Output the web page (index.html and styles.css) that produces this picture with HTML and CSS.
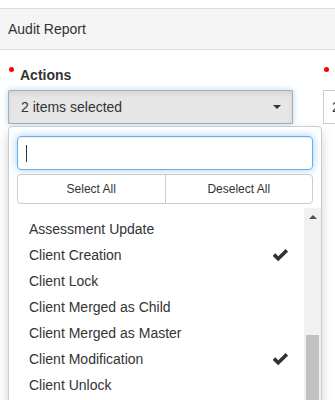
FILE: index.html
```html
<!DOCTYPE html>
<html lang="en">
<head>
    <meta charset="UTF-8">
    <meta name="viewport" content="width=device-width, initial-scale=1.0">
    <title>Audit Report</title>
    <link rel="stylesheet" href="styles.css">
</head>
<body>
    <div class="topbar"></div>
    <div class="panel">
        <div class="panel-heading">Audit Report</div>
        <div class="panel-body">
            <div class="row">
                <div class="col">
                    <label class="field-label"><span class="req"></span>Actions</label>
                    <div class="select-wrap">
                        <button type="button" class="select-btn">
                            <span>2 items selected</span>
                            <span class="caret"></span>
                        </button>

                        <!-- open dropdown -->
                        <div class="menu">
                            <div class="searchbox">
                                <div class="search"><span class="text-cursor"></span></div>
                            </div>
                            <div class="actions">
                                <button type="button" class="act-btn">Select All</button>
                                <button type="button" class="act-btn">Deselect All</button>
                            </div>
                            <div class="list">
                                <div class="items-view">
                                    <ul class="items">
                                        <li>Assessment Update</li>
                                        <li class="selected">Client Creation
                                            <svg class="check" width="15" height="12" viewBox="0 0 15 12"><path d="M1 5.6 L5.2 9.8 L13.9 1.4" fill="none" stroke="#333" stroke-width="3.6"/></svg>
                                        </li>
                                        <li>Client Lock</li>
                                        <li>Client Merged as Child</li>
                                        <li>Client Merged as Master</li>
                                        <li class="selected">Client Modification
                                            <svg class="check" width="15" height="12" viewBox="0 0 15 12"><path d="M1 5.6 L5.2 9.8 L13.9 1.4" fill="none" stroke="#333" stroke-width="3.6"/></svg>
                                        </li>
                                        <li>Client Unlock</li>
                                    </ul>
                                </div>
                                <div class="scrollbar">
                                    <div class="scroll-up"><span class="arrow-up"></span></div>
                                    <div class="thumb"></div>
                                </div>
                            </div>
                        </div>
                    </div>
                </div>
                <div class="col">
                    <label class="field-label"><span class="req"></span>Date From</label>
                    <div class="form-control">2019-01-01</div>
                </div>
            </div>
        </div>
    </div>
</body>
</html>
```

FILE: styles.css
```css
body {
    margin: 0;
    height: 400px;
    font-family: "Liberation Sans", Arial, sans-serif;
    font-size: 14px;
    color: #333;
    background: #fff;
    overflow: hidden;
}
.topbar {
    height: 8px;
    border-bottom: 1px solid #ddd;
}
.panel-heading {
    background: #f5f5f5;
    padding: 10px 8px;
    line-height: 20px;
    border-bottom: 1px solid #ddd;
}
.panel-body {
    padding: 15px 0 0 8px;
}
.row {
    display: flex;
    gap: 30px;
}
.col {
    flex: none;
    width: 285px;
}
.field-label {
    display: flex;
    font-weight: bold;
    line-height: 20px;
    margin-bottom: 5px;
    white-space: nowrap;
}
.req {
    flex: none;
    width: 5px;
    height: 5px;
    margin: 2px 6px 0 1px;
    border-radius: 50%;
    background: #f00;
}
.select-wrap {
    position: relative;
}
.select-btn {
    display: flex;
    align-items: center;
    justify-content: space-between;
    width: 100%;
    height: 34px;
    padding: 6px 11px 6px 12px;
    font-family: inherit;
    font-size: 14px;
    color: #333;
    background: #e6e6e6;
    border: 1px solid #adadad;
    border-radius: 1px;
    box-shadow: inset 0 3px 5px rgba(0, 0, 0, 0.08), 0 0 6px rgba(102, 175, 233, 0.5);
}
.caret {
    width: 0;
    height: 0;
    border-top: 4px solid #333;
    border-left: 4px solid transparent;
    border-right: 4px solid transparent;
}
.menu {
    position: absolute;
    top: 36px;
    left: 0;
    width: 314px;
    box-sizing: border-box;
    padding-top: 5px;
    background: #fff;
    border: 1px solid #ccc;
    border-radius: 4px;
    box-shadow: 0 6px 12px rgba(0, 0, 0, 0.175);
}
.searchbox {
    padding: 4px 8px;
}
.search {
    display: flex;
    align-items: center;
    box-sizing: border-box;
    height: 34px;
    padding: 0 8px;
    border: 1px solid #66afe9;
    border-radius: 4px;
    box-shadow: inset 0 1px 1px rgba(0, 0, 0, 0.075), 0 0 8px rgba(102, 175, 233, 0.6);
}
.text-cursor {
    width: 1px;
    height: 17px;
    background: #333;
}
.actions {
    display: flex;
    padding: 0 8px 4px;
}
.act-btn {
    flex: 1;
    height: 30px;
    font-family: inherit;
    font-size: 12px;
    color: #333;
    background: #fff;
    border: 1px solid #ccc;
    border-radius: 4px 0 0 4px;
}
.act-btn + .act-btn {
    margin-left: -1px;
    border-radius: 0 4px 4px 0;
}
.list {
    display: flex;
    height: 200px;
}
.items-view {
    flex: 1;
    overflow: hidden;
}
.items {
    margin: 0;
    padding: 8px 0 0;
    list-style: none;
}
.items li {
    display: flex;
    align-items: center;
    justify-content: space-between;
    padding: 3px 16px 3px 20px;
    line-height: 20px;
    white-space: nowrap;
}
.scrollbar {
    flex: none;
    width: 17px;
    background: #f1f1f1;
}
.scroll-up {
    display: flex;
    align-items: center;
    justify-content: center;
    height: 17px;
}
.arrow-up {
    width: 0;
    height: 0;
    border-bottom: 4px solid #505050;
    border-left: 4px solid transparent;
    border-right: 4px solid transparent;
}
.thumb {
    width: 13px;
    height: 100px;
    margin: 110px 0 0 2px;
    background: #c1c1c1;
}
.form-control {
    box-sizing: border-box;
    height: 34px;
    padding: 6px 8px;
    line-height: 20px;
    border: 1px solid #ccc;
    white-space: nowrap;
}
```
